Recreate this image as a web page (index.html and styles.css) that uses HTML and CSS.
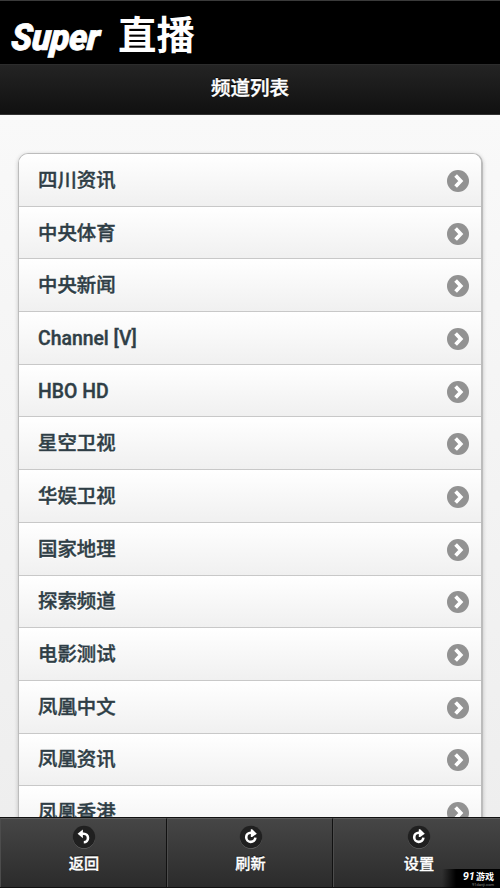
FILE: index.html
```
<!DOCTYPE html>
<html lang="zh-CN">
<head>
<meta charset="utf-8">
<title>Super 直播</title>
<link rel="stylesheet" href="styles.css">
</head>
<body>
<svg class="defs" aria-hidden="true">
<symbol id="chevron" viewBox="0 0 22 22"><circle cx="11" cy="11" r="11" fill="#929292"/><path d="M8.6 5.4l5.2 5.6-5.2 5.6" fill="none" stroke="#fff" stroke-width="3.7"/></symbol>
<symbol id="back" viewBox="0 0 24 24"><circle cx="12" cy="12.8" r="11" fill="#777"/><circle cx="12" cy="12" r="11.2" fill="#202020"/><path d="M9.5 8.8h2.3a4.2 4.2 0 0 1 0 8.4" fill="none" stroke="#fff" stroke-width="2.6"/><path d="M5.6 8.8l5.3-4.4v8.8z" fill="#fff"/></symbol>
<symbol id="refresh" viewBox="0 0 24 24"><circle cx="12" cy="12.8" r="11" fill="#777"/><circle cx="12" cy="12" r="11.2" fill="#202020"/><path d="M13 7.7h-1.2a4.6 4.6 0 1 0 4.6 5" fill="none" stroke="#fff" stroke-width="2.6"/><path d="M11.8 4.2h1.4l4.6 4.5-4.6 3.3h-1.4z" fill="#fff"/></symbol>
</svg>
<header class="brand"><span class="brand-en">Super</span><span class="brand-cn">直播</span></header>
<h1 class="title">频道列表</h1>
<main class="content">
<ul class="list">
<li><span>四川资讯</span><svg><use href="#chevron"/></svg></li>
<li><span>中央体育</span><svg><use href="#chevron"/></svg></li>
<li><span>中央新闻</span><svg><use href="#chevron"/></svg></li>
<li><span>Channel [V]</span><svg><use href="#chevron"/></svg></li>
<li><span>HBO HD</span><svg><use href="#chevron"/></svg></li>
<li><span>星空卫视</span><svg><use href="#chevron"/></svg></li>
<li><span>华娱卫视</span><svg><use href="#chevron"/></svg></li>
<li><span>国家地理</span><svg><use href="#chevron"/></svg></li>
<li><span>探索频道</span><svg><use href="#chevron"/></svg></li>
<li><span>电影测试</span><svg><use href="#chevron"/></svg></li>
<li><span>凤凰中文</span><svg><use href="#chevron"/></svg></li>
<li><span>凤凰资讯</span><svg><use href="#chevron"/></svg></li>
<li><span>凤凰香港</span><svg><use href="#chevron"/></svg></li>
</ul>
</main>
<nav class="tabs">
<a><svg><use href="#back"/></svg><span>返回</span></a>
<a><svg><use href="#refresh"/></svg><span>刷新</span></a>
<a><svg><use href="#refresh"/></svg><span>设置</span></a>
</nav>
<div class="mark"><div class="mark-name"><i>91</i>游戏</div><div class="mark-url">91danji.com</div></div>
</body>
</html>
```
FILE: styles.css
```
* { box-sizing: border-box; }
body {
  margin: 0;
  height: 888px;
  overflow: hidden;
  display: flex;
  flex-direction: column;
  position: relative;
  background: #f4f4f4;
  font-family: Roboto, "Noto Sans CJK SC", sans-serif;
}
.defs { position: absolute; width: 0; height: 0; }
.brand {
  flex: 0 0 64px;
  background: #000;
  border-top: 1px solid #3a3a3a;
  color: #fff;
  display: flex;
  padding-left: 12px;
}
.brand-en {
  width: 106px;
  padding-top: 14px;
  font-size: 37px;
  line-height: 46px;
  font-weight: 900;
  font-style: italic;
  letter-spacing: -0.5px;
  -webkit-text-stroke: 0.7px #fff;
  transform: scaleX(0.94) skewX(-5deg);
  transform-origin: left;
}
.brand-cn {
  padding-top: 11px;
  font-size: 38.5px;
  line-height: 48px;
  font-weight: 700;
}
.title {
  flex: 0 0 51px;
  margin: 0;
  border-top: 1px solid #2c2c2c;
  border-bottom: 1px solid #333;
  background: linear-gradient(#242424, #101010);
  color: #fff;
  font-size: 19.5px;
  line-height: 48px;
  font-weight: 500;
  -webkit-text-stroke: 0.4px #fff;
  text-align: center;
  text-shadow: 0 -1px 1px #000;
}
.content {
  flex: 1;
  min-height: 0;
  overflow: hidden;
  padding: 38px 17px 0 18px;
  background: linear-gradient(#f9f9f9, #eee);
}
.list {
  margin: 0;
  padding: 0;
  list-style: none;
  border: 1px solid #bcbcbc;
  border-width: 1px 2px 1px 1px;
  border-radius: 10px;
  overflow: hidden;
  box-shadow: 0 1px 4px rgba(0, 0, 0, .2);
}
.list li {
  height: 52.7px;
  padding: 0 12px 0 19px;
  display: flex;
  align-items: center;
  justify-content: space-between;
  border-bottom: 1px solid #c8c8c8;
  background: linear-gradient(#fff, #f0f0f0);
  color: #2f3e46;
  font-size: 19.4px;
  line-height: 28px;
  font-weight: 500;
  -webkit-text-stroke: 0.4px #2f3e46;
  text-shadow: 0 1px 0 #fff;
}
.list span { padding-top: 2px; }
.list svg { width: 22px; height: 22px; margin-top: 2px; }
.tabs {
  flex: 0 0 71px;
  display: grid;
  grid-template-columns: 167px 166px 1fr;
  border-top: 1px solid #111;
  border-bottom: 1px solid #111;
}
.tabs a {
  display: flex;
  flex-direction: column;
  align-items: center;
  padding: 6px 0 0 1px;
  border-top: 1px solid #5c5c5c;
  border-right: 1px solid #111;
  border-left: 1px solid #4c4c4c;
  background: linear-gradient(#464646, #2b2b2b);
  color: #fff;
  font-size: 15.2px;
  line-height: 22px;
  font-weight: 500;
  -webkit-text-stroke: 0.3px #fff;
  text-shadow: 0 -1px 1px #111;
}
.tabs a:last-child { padding-left: 4px; border-right: 0; }
.tabs svg { width: 24px; height: 24px; margin-bottom: 4px; }
.mark {
  position: absolute;
  right: 0;
  bottom: 0;
  width: 58px;
  height: 19px;
  padding: 2px 6px 0 0;
  background: linear-gradient(90deg, transparent, #000 14px);
  color: #fff;
  text-align: right;
}
.mark-name { font-size: 9px; line-height: 11px; font-weight: 700; }
.mark-name i { font-size: 11px; margin-right: 1px; }
.mark-url { font-size: 4px; line-height: 4px; color: #888; }
```
